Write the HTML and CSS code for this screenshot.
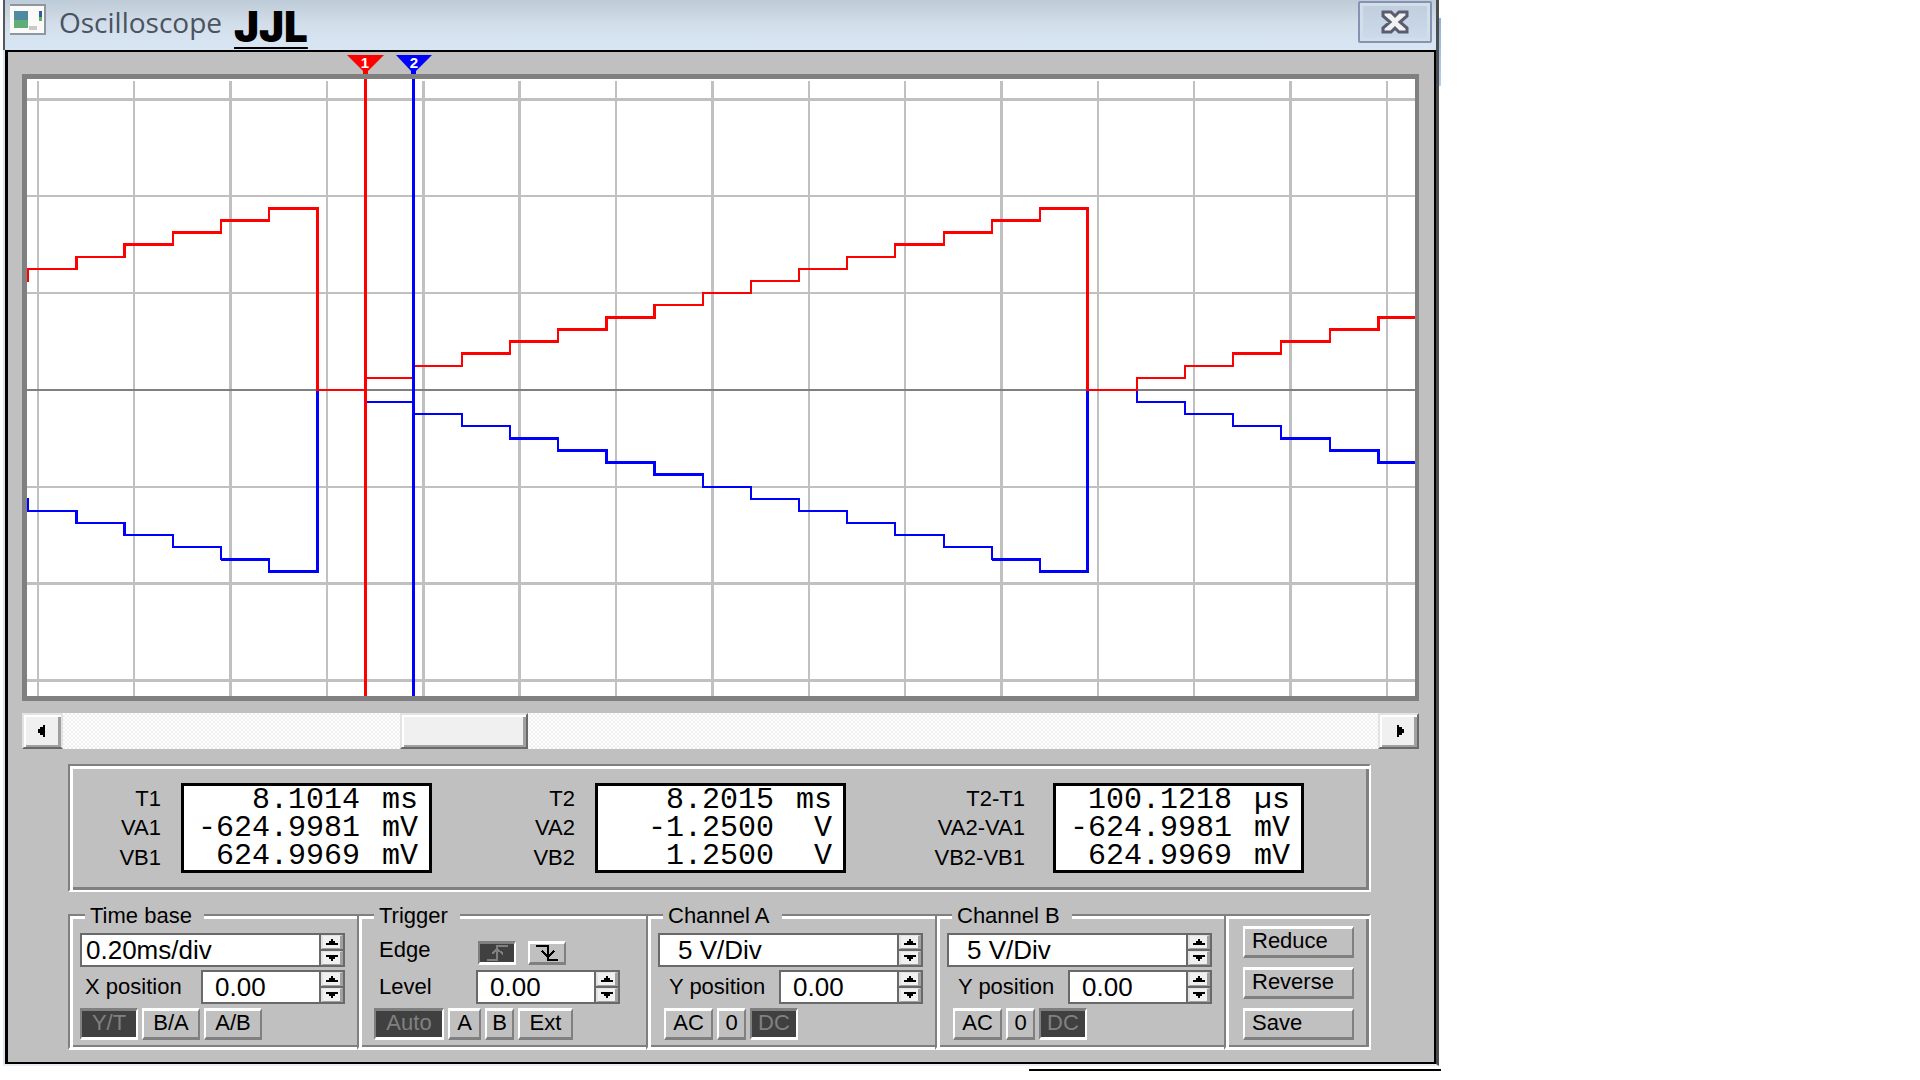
FILE: index.html
```html
<!DOCTYPE html>
<html lang="en">
<head>
<meta charset="utf-8">
<title>Oscilloscope</title>
<link rel="stylesheet" href="styles.css">
</head>
<body>
<main class="window">
  <header class="titlebar">
    <svg class="app-icon" width="36" height="32" viewBox="0 0 36 32" aria-hidden="true">
      <rect x="0" y="0" width="36" height="31" fill="#8f979e"/>
      <rect x="0" y="2" width="34" height="27" fill="#fbfaf8"/>
      <rect x="4" y="7" width="14" height="17" fill="#4f8aa0"/>
      <rect x="4" y="16" width="14" height="8" fill="#5fae78"/>
      <rect x="29" y="7" width="3" height="6" fill="#2f5f9a"/>
      <rect x="29" y="13" width="3" height="4" fill="#5cb060"/>
      <rect x="19" y="22" width="8" height="4" fill="#c8c8c8"/>
    </svg>
    <h1 class="title">Oscilloscope</h1>
    <span class="author">JJL</span>
    <button class="close" type="button" aria-label="Close">
      <svg width="28" height="24" viewBox="0 0 28 24" aria-hidden="true">
        <path d="M2 2H10L14 6L18 2H26V6L19 12L26 18V22H18L14 18L10 22H2V18L9 12L2 6Z" fill="#f2f2f2" stroke="#5a5d70" stroke-width="3"/>
      </svg>
    </button>
  </header>

  <section class="panel">
    <div class="flags">
      <svg viewBox="0 0 1388 22" aria-label="Cursors">
        <path d="M320 3H357L341 19V22H336V19Z" fill="#f00"/>
        <path d="M369 3H405L389 19V22H384V19Z" fill="#00f"/>
        <text class="flag-text" x="338" y="16">1</text>
        <text class="flag-text" x="387" y="16">2</text>
      </svg>
    </div>

    <div class="screen">
      <svg viewBox="0 0 1388 617" shape-rendering="crispEdges" aria-label="Waveforms">
        <g fill="#c0c0c0">
          <path d="M10 2h2v615h-2zM106 2h2v615h-2zM202 2h3v615h-3zM299 2h2v615h-2zM395 2h3v615h-3zM491 2h3v615h-3zM588 2h2v615h-2zM684 2h3v615h-3zM781 2h2v615h-2zM877 2h2v615h-2zM973 2h3v615h-3zM1070 2h2v615h-2zM1166 2h2v615h-2zM1262 2h3v615h-3zM1359 2h2v615h-2z"/>
          <path d="M0 19h1388v3H0zM0 116h1388v2H0zM0 213h1388v2H0zM0 407h1388v2H0zM0 503h1388v3H0zM0 600h1388v3H0z"/>
        </g>
        <path d="M0 310h1388v2H0z" fill="#808080"/>
        <path class="trace trace-b" d="M1 419V432H49V444H97V456H146V468H194V480H242V492H290V311H339V323H387V335H435V347H483V359H531V371H579V383H627V395H676V408H724V420H772V432H820V444H868V456H917V468H965V480H1013V492H1060V311H1110V323H1158V335H1206V347H1254V359H1303V371H1351V383H1388"/>
        <path class="trace trace-b bold" d="M49.5 431V444M97.5 443V456M194 480.5H243M241 492.5H290.5V311M482 359.5H532M530 371.5H579.5V383.5H627.5V395.5H677M965 480.5H1014M1012 492.5H1060.5V311M1253 359.5H1304M1302 371.5H1351.5V383.5H1388"/>
        <path class="trace trace-a" d="M1 203V190H49V178H97V165H146V153H194V141H242V129H290V311H339V299H387V287H435V274H483V262H531V250H579V238H627V226H676V214H724V202H772V190H820V178H868V165H917V153H965V141H1013V129H1060V311H1110V299H1158V287H1206V274H1254V262H1303V250H1351V238H1388"/>
        <path class="trace trace-a bold" d="M49.5 179V191M97.5 179V165.5H147M145 153.5H195M193 141.5H243M241 129.5H290.5V311M434 274.5H484M482 262.5H532M530 250.5H579.5V238.5H627.5V225M867 165.5H918M916 153.5H966M964 141.5H1014M1012 129.5H1060.5V311M1205 274.5H1255M1253 262.5H1304M1302 250.5H1351.5V238.5H1388"/>
        <path d="M337 0h3v617h-3z" fill="#f00"/>
        <path d="M385 0h3v617h-3z" fill="#00f"/>
      </svg>
    </div>

    <div class="scrollbar">
      <button type="button" class="scroll-btn" aria-label="Scroll left">
        <svg width="8" height="12" viewBox="0 0 8 12" shape-rendering="crispEdges"><path d="M8 0V12H6V10H3V8H1V4H3V2H6V0Z"/></svg>
      </button>
      <input class="scroll-track" type="range" min="0" max="1000" value="284" aria-label="Time position">
      <button type="button" class="scroll-btn" aria-label="Scroll right">
        <svg width="8" height="12" viewBox="0 0 8 12" shape-rendering="crispEdges"><path d="M0 0V12H2V10H5V8H7V4H5V2H2V0Z"/></svg>
      </button>
    </div>

    <div class="readouts">
      <table class="readout">
        <tr><th scope="row">T1</th><td class="value">8.1014</td><td class="unit">ms</td></tr>
        <tr><th scope="row">VA1</th><td class="value">-624.9981</td><td class="unit">mV</td></tr>
        <tr><th scope="row">VB1</th><td class="value">624.9969</td><td class="unit">mV</td></tr>
      </table>
      <table class="readout">
        <tr><th scope="row">T2</th><td class="value">8.2015</td><td class="unit">ms</td></tr>
        <tr><th scope="row">VA2</th><td class="value">-1.2500</td><td class="unit">V</td></tr>
        <tr><th scope="row">VB2</th><td class="value">1.2500</td><td class="unit">V</td></tr>
      </table>
      <table class="readout">
        <tr><th scope="row">T2-T1</th><td class="value">100.1218</td><td class="unit">µs</td></tr>
        <tr><th scope="row">VA2-VA1</th><td class="value">-624.9981</td><td class="unit">mV</td></tr>
        <tr><th scope="row">VB2-VB1</th><td class="value">624.9969</td><td class="unit">mV</td></tr>
      </table>
    </div>

    <form class="controls">
      <fieldset class="group">
        <legend>Time base</legend>
        <div class="rows">
          <div class="spin">
            <input type="text" value="0.20ms/div" aria-label="Time base scale">
            <span class="arrows">
              <button type="button" aria-label="Increase"><svg viewBox="0 0 12 6"><path d="M5 0H7V2H9V4H12V6H0V4H3V2H5Z"/></svg></button>
              <button type="button" aria-label="Decrease"><svg viewBox="0 0 12 6"><path d="M0 0H12V2H9V4H7V6H5V4H3V2H0Z"/></svg></button>
            </span>
          </div>
          <div class="field">
            <label for="xpos">X position</label>
            <div class="spin number">
              <input type="text" id="xpos" value="0.00">
              <span class="arrows">
                <button type="button" aria-label="Increase"><svg viewBox="0 0 12 6"><path d="M5 0H7V2H9V4H12V6H0V4H3V2H5Z"/></svg></button>
                <button type="button" aria-label="Decrease"><svg viewBox="0 0 12 6"><path d="M0 0H12V2H9V4H7V6H5V4H3V2H0Z"/></svg></button>
              </span>
            </div>
          </div>
          <div class="toggles toggles-time">
            <button type="button" class="btn pressed" aria-pressed="true">Y/T</button>
            <button type="button" class="btn">B/A</button>
            <button type="button" class="btn">A/B</button>
          </div>
        </div>
      </fieldset>

      <fieldset class="group trigger">
        <legend>Trigger</legend>
        <div class="rows">
          <div class="field">
            <span class="label">Edge</span>
            <div class="edges">
              <button type="button" class="btn edge pressed" aria-pressed="true" aria-label="Rising edge">
                <svg width="22" height="16" viewBox="0 0 22 16" shape-rendering="crispEdges"><path d="M1 15H11V1H22M6 9L11 4L17 9" fill="none" stroke="#808080" stroke-width="2"/></svg>
              </button>
              <button type="button" class="btn edge" aria-label="Falling edge">
                <svg width="22" height="16" viewBox="0 0 22 16" shape-rendering="crispEdges"><path d="M0 1H12V15H22M6 6L12 12L18 6" fill="none" stroke="#000" stroke-width="2"/></svg>
              </button>
            </div>
          </div>
          <div class="field">
            <label for="level">Level</label>
            <div class="spin number">
              <input type="text" id="level" value="0.00">
              <span class="arrows">
                <button type="button" aria-label="Increase"><svg viewBox="0 0 12 6"><path d="M5 0H7V2H9V4H12V6H0V4H3V2H5Z"/></svg></button>
                <button type="button" aria-label="Decrease"><svg viewBox="0 0 12 6"><path d="M0 0H12V2H9V4H7V6H5V4H3V2H0Z"/></svg></button>
              </span>
            </div>
          </div>
          <div class="toggles toggles-trigger">
            <button type="button" class="btn pressed" aria-pressed="true">Auto</button>
            <button type="button" class="btn">A</button>
            <button type="button" class="btn">B</button>
            <button type="button" class="btn">Ext</button>
          </div>
        </div>
      </fieldset>

      <fieldset class="group channel">
        <legend>Channel A</legend>
        <div class="rows">
          <div class="spin">
            <input type="text" value="5 V/Div" aria-label="Channel A scale">
            <span class="arrows">
              <button type="button" aria-label="Increase"><svg viewBox="0 0 12 6"><path d="M5 0H7V2H9V4H12V6H0V4H3V2H5Z"/></svg></button>
              <button type="button" aria-label="Decrease"><svg viewBox="0 0 12 6"><path d="M0 0H12V2H9V4H7V6H5V4H3V2H0Z"/></svg></button>
            </span>
          </div>
          <div class="field">
            <label for="ypos-a">Y position</label>
            <div class="spin number">
              <input type="text" id="ypos-a" value="0.00">
              <span class="arrows">
                <button type="button" aria-label="Increase"><svg viewBox="0 0 12 6"><path d="M5 0H7V2H9V4H12V6H0V4H3V2H5Z"/></svg></button>
                <button type="button" aria-label="Decrease"><svg viewBox="0 0 12 6"><path d="M0 0H12V2H9V4H7V6H5V4H3V2H0Z"/></svg></button>
              </span>
            </div>
          </div>
          <div class="toggles toggles-channel">
            <button type="button" class="btn">AC</button>
            <button type="button" class="btn">0</button>
            <button type="button" class="btn pressed" aria-pressed="true">DC</button>
          </div>
        </div>
      </fieldset>

      <fieldset class="group channel">
        <legend>Channel B</legend>
        <div class="rows">
          <div class="spin">
            <input type="text" value="5 V/Div" aria-label="Channel B scale">
            <span class="arrows">
              <button type="button" aria-label="Increase"><svg viewBox="0 0 12 6"><path d="M5 0H7V2H9V4H12V6H0V4H3V2H5Z"/></svg></button>
              <button type="button" aria-label="Decrease"><svg viewBox="0 0 12 6"><path d="M0 0H12V2H9V4H7V6H5V4H3V2H0Z"/></svg></button>
            </span>
          </div>
          <div class="field">
            <label for="ypos-b">Y position</label>
            <div class="spin number">
              <input type="text" id="ypos-b" value="0.00">
              <span class="arrows">
                <button type="button" aria-label="Increase"><svg viewBox="0 0 12 6"><path d="M5 0H7V2H9V4H12V6H0V4H3V2H5Z"/></svg></button>
                <button type="button" aria-label="Decrease"><svg viewBox="0 0 12 6"><path d="M0 0H12V2H9V4H7V6H5V4H3V2H0Z"/></svg></button>
              </span>
            </div>
          </div>
          <div class="toggles toggles-channel">
            <button type="button" class="btn">AC</button>
            <button type="button" class="btn">0</button>
            <button type="button" class="btn pressed" aria-pressed="true">DC</button>
          </div>
        </div>
      </fieldset>

      <div class="group actions">
        <button type="button" class="btn">Reduce</button>
        <button type="button" class="btn">Reverse</button>
        <button type="button" class="btn">Save</button>
      </div>
    </form>
  </section>
</main>
<div class="rule"></div>
</body>
</html>
```
FILE: styles.css
```css
* {
  box-sizing: border-box;
}

body {
  margin: 0;
  background: #fff;
  color: #000;
  font: 22px/26px "Liberation Sans", Arial, sans-serif;
}

button,
input {
  font: inherit;
  color: inherit;
  margin: 0;
  padding: 0;
  border: 0;
  border-radius: 0;
}

svg {
  display: block;
}

/* Window frame */

.window {
  width: calc(75% - 4px);
  margin-left: 3px;
  border-right: 3px solid #4c4c4c;
  border-bottom: 2px solid #ebedf5;
  position: relative;
}

.window::after {
  content: "";
  position: absolute;
  left: calc(100% + 3px);
  top: 18px;
  width: 2px;
  height: 68px;
  background: linear-gradient(#93b0d4, #b6cfea);
}

.titlebar {
  display: flex;
  align-items: flex-start;
  height: 50px;
  padding: 1px 4px 0 5px;
  border-left: 2px solid #55585c;
  background: linear-gradient(#becbd8 0, #c6d3df 10px, #d2deea 24px, #d7e4f2 42px);
}

.app-icon {
  margin-top: 3px;
}

.title {
  margin: 0 0 0 13px;
  padding-top: 2px;
  font: 400 28px/38px "Open Sans", "Noto Sans", sans-serif;
  color: #4a5360;
}

.author {
  margin-left: 12px;
  padding-top: 4px;
  font: 900 42px/44px Inter, "Open Sans", sans-serif;
  text-decoration: underline 2px;
  text-underline-offset: 5px;
  text-decoration-skip-ink: none;
}

.close {
  display: flex;
  align-items: center;
  justify-content: center;
  width: 74px;
  height: 42px;
  margin-left: auto;
  border: 2px solid #8592b0;
  border-radius: 2px;
  box-shadow: inset 0 0 0 3px #d3deeb;
  background: linear-gradient(#bfcddd, #cddcec);
}

.panel {
  padding: 0 15px 12px 14px;
  border: solid #000;
  border-width: 2px 2px 2px 3px;
  box-shadow: -2px 0 0 #d6e4f2;
  margin-left: 2px;
  background: #c0c0c0;
}

/* Scope display */

.flags {
  padding: 0 4px 0 5px;
}

.flags svg,
.screen svg {
  width: 100%;
  height: auto;
}

.flag-text {
  font: 700 15px "Liberation Sans", Arial, sans-serif;
  fill: #fff;
  text-anchor: middle;
}

.screen {
  border: solid #808080;
  border-width: 5px 4px 5px 5px;
  background: #fff;
}

.trace {
  fill: none;
  stroke-width: 2px;
}

.bold {
  stroke-width: 3px;
}

.trace-a {
  stroke: #f00;
}

.trace-b {
  stroke: #00f;
}

/* Scroll bar */

.scrollbar {
  display: flex;
  height: 36px;
  margin: 12px 0 15px;
}

.scroll-btn {
  display: flex;
  align-items: center;
  justify-content: center;
  width: 41px;
  border: 2px solid;
  border-color: #e3e3e3 #696969 #696969 #e3e3e3;
  box-shadow: inset 2px 2px 0 #fff, inset -3px -2px 0 #a0a0a0;
  background: #f0f0f0;
}

.scroll-btn:first-child {
  padding-right: 4px;
  border-right-color: #e3e3e3;
}

.scroll-btn:last-child {
  padding-left: 4px;
}

.scroll-track {
  -webkit-appearance: none;
  appearance: none;
  flex: 1;
  min-width: 0;
  height: 36px;
  background: repeating-conic-gradient(#efefef 0 25%, #fff 0 50%) 0 0 / 4px 4px;
}

.scroll-track::-webkit-slider-thumb {
  -webkit-appearance: none;
  width: 128px;
  height: 36px;
  border: 2px solid;
  border-color: #e3e3e3 #696969 #696969 #e3e3e3;
  box-shadow: inset 2px 2px 0 #fff, inset -3px -2px 0 #a0a0a0;
  background: #f0f0f0;
}

/* Cursor readouts */

.readouts {
  display: grid;
  grid-template-columns: 362fr 414fr 458fr 65fr;
  margin: 0 48px 9px 46px;
  padding: 17px 0;
  border: 2px solid;
  border-color: #808080 #fff #fff #808080;
  box-shadow: inset 3px 3px 0 #fff, inset -3px -3px 0 #808080;
}

.readout {
  width: 100%;
  border-spacing: 0;
}

.readout th {
  padding: 0 20px 0 0;
  font-weight: 400;
  text-align: right;
}

.readout:last-child th {
  padding-right: 28px;
}

.readout td {
  padding: 0;
  background: #fff;
  font: 30px/28px "Liberation Mono", "Courier New", monospace;
  text-align: right;
}

.readout .value {
  width: 182px;
  padding-right: 3px;
  border-left: 3px solid #000;
}

.readout .unit {
  width: 69px;
  padding-right: 11px;
  border-right: 3px solid #000;
}

.readout tr:first-child td {
  border-top: 3px solid #000;
}

.readout tr:last-child td {
  border-bottom: 3px solid #000;
}

/* Control groups */

.controls {
  display: grid;
  grid-template-columns: repeat(4, minmax(0, 289fr)) minmax(0, 147fr);
  margin: 0 48px 0 46px;
}

.group {
  min-width: 0;
  margin: 0;
  padding: 4px 12px 7px 10px;
  border: solid;
  border-width: 2px 0 3px 2px;
  border-color: #808080 #fff #fff #808080;
  box-shadow: inset 3px 3px 0 #fff, inset 0 -2px 0 #808080;
}

.group legend {
  margin-left: 5px;
  padding: 2px 12px 0 5px;
  background: #c0c0c0;
}

.trigger {
  padding-right: 26px;
  padding-left: 15px;
}

.trigger legend {
  margin-left: 0;
}

.rows {
  display: grid;
  grid-template-columns: minmax(0, 1fr);
  row-gap: 3px;
}

.field {
  display: flex;
  align-items: center;
  height: 34px;
  padding-left: 5px;
}

.channel .field {
  padding-left: 11px;
}

.spin {
  display: flex;
  height: 34px;
  border: 2px solid #696969;
  background: #fff;
}

.spin input {
  flex: 1;
  min-width: 0;
  padding-left: 4px;
  background: #fff;
  font-size: 26px;
}

.channel .spin input {
  padding-left: 18px;
}

.number {
  width: 144px;
  margin-left: auto;
}

.number input,
.channel .number input {
  padding-left: 12px;
}

.arrows {
  display: grid;
  grid-template-rows: 1fr 1fr;
  gap: 2px;
  width: 24px;
  border-left: 2px solid #696969;
  background: #696969;
}

.arrows button {
  display: flex;
  align-items: center;
  justify-content: center;
  border: solid;
  border-width: 1px 3px 1px 2px;
  border-color: #e3e3e3 #a0a0a0 #a0a0a0 #e3e3e3;
  background: #f0f0f0;
}

.arrows svg {
  width: 12px;
  height: 6px;
  shape-rendering: crispEdges;
}

.btn {
  height: 32px;
  padding-bottom: 3px;
  border: solid;
  border-width: 3px 2px 3px 2px;
  border-color: #fff #808080 #808080 #fff;
  background: #c0c0c0;
  line-height: 22px;
}

.pressed {
  border-color: #808080 #fff #fff #808080;
  background: #404040;
  color: #808080;
}

.edges {
  display: flex;
  gap: 12px;
  width: 142px;
  margin-left: auto;
  padding-top: 6px;
}

.edge {
  display: flex;
  align-items: center;
  justify-content: center;
  width: 38px;
  height: 24px;
  padding: 0;
}

.toggles {
  display: grid;
  gap: 4px;
  padding-top: 1px;
}

.toggles-time {
  grid-template-columns: 58px 58px 58px;
}

.toggles-trigger {
  grid-template-columns: 70px 33px 29px 55px;
}

.toggles-channel {
  grid-template-columns: 49px 29px 48px;
  padding-left: 6px;
}

.actions {
  display: flex;
  flex-direction: column;
  gap: 9px;
  margin-top: 13px;
  padding: 10px 15px 7px 17px;
  border-right-width: 2px;
  box-shadow: inset 3px 3px 0 #fff, inset -3px -2px 0 #808080;
}

.actions .btn {
  padding-left: 7px;
  text-align: left;
}

.rule {
  width: 412px;
  height: 2px;
  margin: 3px 0 0 1029px;
  background: #000;
}
```
